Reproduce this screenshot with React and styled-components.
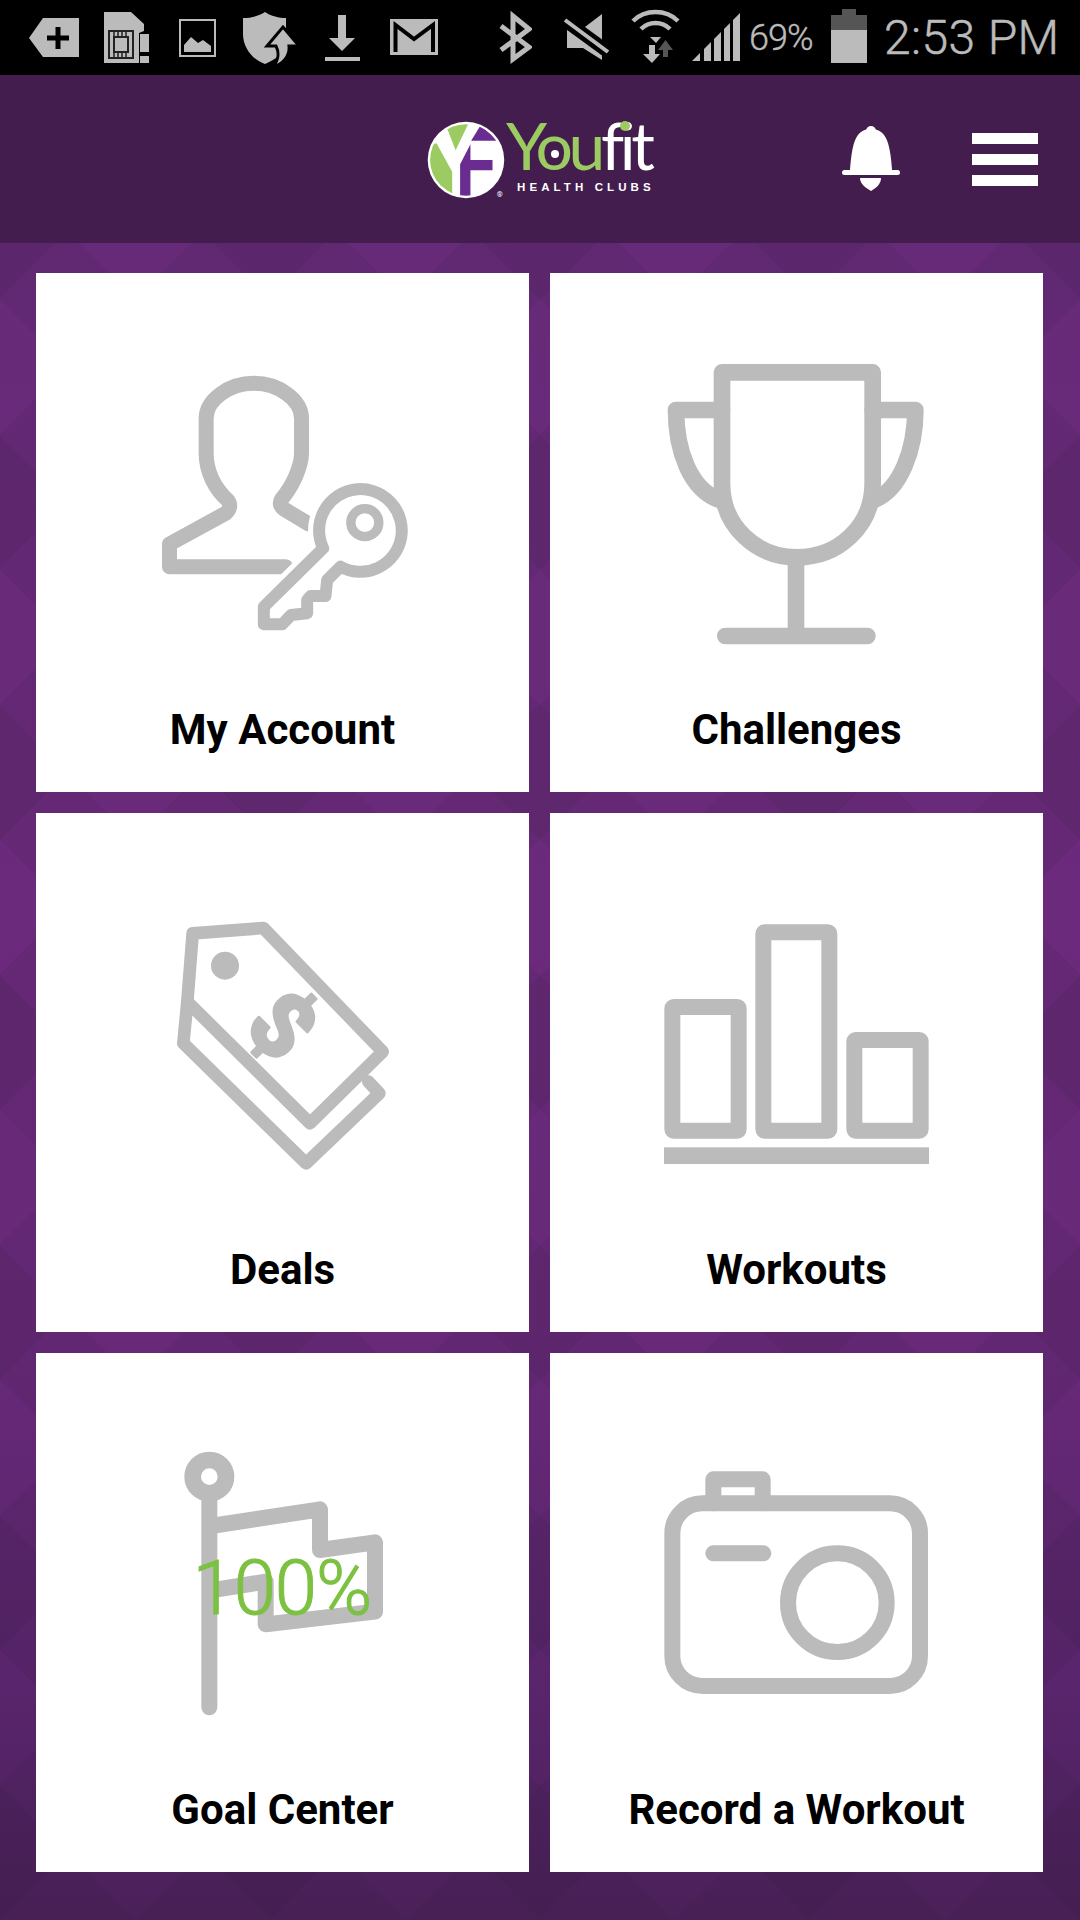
import React from 'react'
import styled, { createGlobalStyle } from 'styled-components'

const GlobalStyle = createGlobalStyle`
  html, body {
    margin: 0;
    padding: 0;
    background: #000;
  }
  * {
    box-sizing: border-box;
  }
`

const Page = styled.div`
  width: 1080px;
  height: 1920px;
  display: flex;
  flex-direction: column;
  overflow: hidden;
  font-family: Roboto, "Liberation Sans", sans-serif;
`

const StatusBar = styled.div`
  height: 75px;
  flex: none;
  background: #000;
  display: flex;
  align-items: center;
  padding-left: 29px;
  color: #bbb;
`

const StatusSvg = styled.svg`
  flex: none;
  height: 75px;
  margin-left: ${(p) => p.$left || 0}px;
  fill: #bbb;
`

const Battery = styled.span`
  flex: none;
  width: 66px;
  margin-left: 9px;
  font-size: 36px;
  font-weight: 300;
  white-space: nowrap;
  letter-spacing: -1px;
  -webkit-text-stroke: 0.4px #bbb;
`

const Clock = styled.span`
  flex: none;
  margin-left: 17px;
  font-size: 48px;
  font-weight: 300;
  white-space: nowrap;
  letter-spacing: 0.4px;
  -webkit-text-stroke: 0.5px #bbb;
`

const Header = styled.header`
  height: 168px;
  flex: none;
  background: #431d4e;
  display: flex;
  align-items: center;
  padding: 0 42px 0 427px;
`

const Logo = styled.div`
  display: flex;
  width: 231px;
  height: 80px;
  margin-top: 2px;
`

const LogoMark = styled.svg`
  flex: none;
  width: 80px;
  height: 80px;
`

const LogoText = styled.div`
  position: relative;
  margin-left: -1px;
  display: flex;
  flex-direction: column;
  color: #fff;
`

const Word = styled.div`
  font-family: Lato, Roboto, sans-serif;
  font-size: 66px;
  line-height: 66px;
  height: 66px;
  margin-top: -8px;
  letter-spacing: -4.4px;
  font-variant-ligatures: none;
  white-space: nowrap;
`

const WordGreen = styled.span`
  color: #9ccb62;
`

const OCenter = styled.span`
  position: absolute;
  left: 45px;
  top: 30px;
  width: 8px;
  height: 8px;
  border-radius: 50%;
  background: #fff;
`

const IDot = styled.span`
  position: absolute;
  left: 114px;
  top: 1px;
  width: 10px;
  height: 10px;
  border-radius: 50%;
  background: #9ccb62;
`

const Tagline = styled.div`
  font-family: "Liberation Sans", sans-serif;
  font-size: 11.5px;
  line-height: 12px;
  font-weight: 700;
  letter-spacing: 4.1px;
  margin: 3px 0 0 11px;
  white-space: nowrap;
`

const BellIcon = styled.svg`
  flex: none;
  width: 58px;
  height: 66px;
  margin-left: auto;
  fill: #fff;
`

const Burger = styled.div`
  flex: none;
  width: 66px;
  margin-left: 72px;
  display: flex;
  flex-direction: column;
  gap: 10px;
`

const BurgerBar = styled.span`
  display: block;
  height: 11px;
  background: #fff;
`

const Main = styled.main`
  flex: 1;
  padding: 30px 37px 0 36px;
  display: grid;
  grid-template-columns: 493px 493px;
  grid-auto-rows: 519px;
  gap: 21px;
  align-content: start;
  background:
    repeating-linear-gradient(45deg, rgba(30, 20, 40, 0.08) 0 95px, transparent 95px 191px),
    repeating-linear-gradient(-45deg, rgba(30, 20, 40, 0.08) 0 95px, transparent 95px 191px),
    linear-gradient(180deg, #672a79 0%, #6b2a7b 40%, #682979 65%, #57246a 88%, #4b2159 100%);
`

const Card = styled.div`
  background: #fff;
  padding-top: 66px;
  display: flex;
  flex-direction: column;
  align-items: center;
`

const IconBox = styled.div`
  position: relative;
  width: 300px;
  height: 320px;
  flex: none;
`

const Icon = styled.svg`
  display: block;
  width: 300px;
  height: 320px;
  overflow: visible;
  fill: none;
  stroke: #bbb;
  stroke-linecap: round;
  stroke-linejoin: round;
`

const Percent = styled.span`
  position: absolute;
  left: 60px;
  top: 131px;
  font-size: 76px;
  line-height: 76px;
  font-weight: 300;
  letter-spacing: -1px;
  color: #7cc142;
  -webkit-text-stroke: 1px #7cc142;
  white-space: nowrap;
`

const Label = styled.div`
  margin-top: 46px;
  font-size: 42px;
  line-height: 50px;
  font-weight: 700;
  color: #000;
  white-space: nowrap;
`

// the status row, coordinates are px inside the 75px tall bar
const TagPlus = () => (
  <StatusSvg width="50" viewBox="0 0 50 75">
    <polygon points="0,38 14,18 50,18 50,57 14,57" />
    <path d="M29 27v22M18 38h22" stroke="#000" strokeWidth="5" />
  </StatusSvg>
)

const SimAlert = () => (
  <StatusSvg $left={25} width="45" viewBox="0 0 45 75">
    <polygon points="0,12 27,12 40,24 40,31 35,33 35,63 0,63" />
    <rect x="36" y="34" width="9" height="18" />
    <rect x="36" y="56" width="9" height="7" />
    <rect x="5" y="31" width="24" height="27" fill="none" stroke="#222" strokeWidth="2" />
    <rect x="10" y="37" width="14" height="15" fill="none" stroke="#222" strokeWidth="2" />
    <path d="M10 31v6M14 31v6M18 31v6M22 31v6M10 52v6M14 52v6M18 52v6M22 52v6" stroke="#222" strokeWidth="1.5" />
  </StatusSvg>
)

const PictureIcon = () => (
  <StatusSvg $left={30} width="37" viewBox="0 0 37 75">
    <rect x="1" y="20" width="35" height="36" fill="none" stroke="#bbb" strokeWidth="2" />
    <polygon points="5,52 5,45 12,37 19,43 24,40 32,46 32,52" />
  </StatusSvg>
)

const ShieldIcon = () => (
  <StatusSvg $left={27} width="53" viewBox="0 0 53 75">
    <path d="M22 12C28 16 36 18 43 18V42C43 52 32 60 22 64C10 60 0 48 0 34V18C8 18 16 16 22 12Z" />
    <path d="M30 67C36 60 36 52 33 46H24L40 27L56 46H46C47 56 40 64 30 67Z" stroke="#000" strokeWidth="3" />
  </StatusSvg>
)

const DownloadIcon = () => (
  <StatusSvg $left={29} width="35" viewBox="0 0 35 75">
    <polygon points="13,15 21,15 21,38 30,38 17,51 4,38 13,38" />
    <rect x="0" y="57" width="35" height="4" />
  </StatusSvg>
)

const GmailIcon = () => (
  <StatusSvg $left={30} width="48" viewBox="0 0 48 75">
    <rect x="0" y="19" width="48" height="36" />
    <path d="M5.5 52V25L24 39L43 25V52" fill="none" stroke="#000" strokeWidth="4" />
  </StatusSvg>
)

const BluetoothIcon = () => (
  <StatusSvg $left={61} width="33" viewBox="0 0 33 75">
    <path d="M2 26L30 47L14 59V16L30 29L2 50" fill="none" stroke="#bbb" strokeWidth="5" />
  </StatusSvg>
)

const MuteIcon = () => (
  <StatusSvg $left={31} width="48" viewBox="0 0 48 75">
    <polygon points="39,14 39,60 20,48 4,48 4,30 18,30" />
    <path d="M0 19L48 54" stroke="#000" strokeWidth="13" />
    <path d="M2 20L45 52" stroke="#bbb" strokeWidth="4" />
  </StatusSvg>
)

const WifiIcon = () => (
  <StatusSvg $left={20} width="49" viewBox="0 0 49 75">
    <g fill="none" stroke="#bbb" strokeWidth="4.5">
      <path d="M2 21C14 9 35 9 47 21" />
      <path d="M10 29C18 21 31 21 39 29" />
    </g>
    <polygon points="19,37 30,37 25,43" />
    <polygon points="18,45 24,45 24,54 29,54 21,63 12,54 18,54" />
    <polygon points="32,50 32,57 37,57 37,50 42,50 34.500,40 27,50" fill="#555" />
  </StatusSvg>
)

const SignalIcon = () => (
  <StatusSvg $left={12} width="48" viewBox="0 0 48 75">
    <polygon points="0,61 8,53 8,61" />
    <polygon points="12,61 12,49 19,42 19,61" />
    <polygon points="22,61 22,39 29,32 29,61" />
    <polygon points="32,61 32,29 38,23 38,61" />
    <polygon points="41,61 41,20 48,13 48,61" />
  </StatusSvg>
)

const BatteryIcon = () => (
  <StatusSvg $left={16} width="36" viewBox="0 0 36 75">
    <rect x="11" y="9" width="14" height="6" fill="#555" />
    <rect x="0" y="15" width="36" height="15" fill="#555" />
    <rect x="0" y="30" width="36" height="33" />
  </StatusSvg>
)

// logo drawn in the crop's own units, 240 across
const YfMark = () => (
  <LogoMark viewBox="52 62 232 232">
    <defs>
      <clipPath id="yf-disc">
        <circle cx="165" cy="178" r="104" />
      </clipPath>
    </defs>
    <circle cx="165" cy="178" r="111" fill="#fff" />
    <g clipPath="url(#yf-disc)">
      <polygon points="40,130 80,130 125,212 125,290 40,290" fill="#9ccb62" />
      <polygon points="100,60 178,60 135,150" fill="#9ccb62" />
      <polygon points="207,78 260,122 180,122" fill="#6b2c91" />
      <polygon points="178,132 148,190 148,290 178,290 178,208 242,208 242,178 178,178" fill="#6b2c91" />
    </g>
    <text x="263" y="286" fontSize="22" fill="#fff" textAnchor="middle" fontFamily="Roboto, sans-serif">®</text>
  </LogoMark>
)

const Bell = () => (
  <BellIcon viewBox="0 0 58 66">
    <circle cx="29" cy="5" r="5" />
    <path d="M29 3C15 3 10 14 8 44H50C48 14 43 3 29 3Z" />
    <rect x="0" y="44" width="58" height="5" rx="2.5" />
    <path d="M18 52H39C39 58 34 62 29 65C24 62 18 58 18 52Z" />
  </BellIcon>
)

const AccountIcon = () => (
  <Icon viewBox="12.500 -33 900 960">
    <path
      strokeWidth="45"
      d="M470 650H122V582L290 490Q312 472 296 450C262 420 232 370 232 310V205C232 150 300 100 375 100C450 100 518 150 518 205V310C518 350 490 410 460 445Q445 465 470 480L540 522"
    />
    <path
      stroke="#fff"
      strokeWidth="66"
      fill="#fff"
      d="M583 595L405 770V823H460L487 795L535 790V750L545 738H590L595 690L635 650A124 124 0 1 0 583 595Z"
    />
    <path
      strokeWidth="36"
      fill="#fff"
      d="M583 595L405 770V823H460L487 795L535 790V750L545 738H590L595 690L635 650A124 124 0 1 0 583 595Z"
    />
    <circle cx="708" cy="518" r="42" strokeWidth="28" />
  </Icon>
)

const TrophyIcon = () => (
  <Icon viewBox="21 -33 900 960" strokeWidth="50">
    <path d="M246 67H698V400C698 530 594 622 472 622C350 622 246 530 246 400Z" />
    <path d="M246 180H108C108 300 150 420 240 450" />
    <path d="M698 180H826C826 300 780 420 702 450" />
    <path d="M468 622V858M256 858H682" />
  </Icon>
)

const DealsIcon = () => (
  <Icon viewBox="-51 -63 900 960" strokeWidth="38">
    <path d="M128 100L340 84L698 455L480 670L112 305Z" />
    <path d="M112 305L100 430L468 790L688 580L655 545" />
    <circle cx="225" cy="197" r="42" fill="#bbb" stroke="none" />
    <text
      x="398"
      y="375"
      transform="rotate(45 398 375)"
      dy="95"
      textAnchor="middle"
      fontSize="270"
      fontWeight="900"
      fontFamily="Roboto, sans-serif"
      fill="#bbb"
      strokeWidth="8"
    >
      $
    </text>
  </Icon>
)

const WorkoutsIcon = () => (
  <Icon viewBox="21 -63 900 960" strokeWidth="48">
    <rect x="97" y="321" width="199" height="371" rx="4" />
    <rect x="370" y="97" width="198" height="595" rx="4" />
    <rect x="643" y="420" width="199" height="272" rx="4" />
    <rect x="72" y="742" width="795" height="50" fill="#bbb" stroke="none" />
  </Icon>
)

const GoalIcon = () => (
  <Icon viewBox="-111 -33 900 960" strokeWidth="48">
    <path d="M118 200V832" />
    <circle cx="118" cy="140" r="50" strokeWidth="50" />
    <path d="M142 285L450 238V360L615 337V545L287 583V455L142 478" />
  </Icon>
)

const CameraIcon = () => (
  <Icon viewBox="-9 -93 900 960" strokeWidth="48">
    <rect x="67" y="160" width="743" height="548" rx="90" />
    <path d="M190 160V88H338V160" />
    <path d="M190 310H340" />
    <circle cx="562" cy="458" r="148" />
  </Icon>
)

const tiles = [
  { label: 'My Account', icon: <AccountIcon /> },
  { label: 'Challenges', icon: <TrophyIcon /> },
  { label: 'Deals', icon: <DealsIcon /> },
  { label: 'Workouts', icon: <WorkoutsIcon /> },
  { label: 'Goal Center', icon: <GoalIcon />, percent: '100%' },
  { label: 'Record a Workout', icon: <CameraIcon /> },
]

const App = () => {
  return (
    <Page>
      <GlobalStyle />
      <StatusBar>
        <TagPlus />
        <SimAlert />
        <PictureIcon />
        <ShieldIcon />
        <DownloadIcon />
        <GmailIcon />
        <BluetoothIcon />
        <MuteIcon />
        <WifiIcon />
        <SignalIcon />
        <Battery>69%</Battery>
        <BatteryIcon />
        <Clock>2:53 PM</Clock>
      </StatusBar>
      <Header>
        <Logo>
          <YfMark />
          <LogoText>
            <Word>
              <WordGreen>You</WordGreen>fit
            </Word>
            <OCenter />
            <IDot />
            <Tagline>HEALTH CLUBS</Tagline>
          </LogoText>
        </Logo>
        <Bell />
        <Burger>
          <BurgerBar />
          <BurgerBar />
          <BurgerBar />
        </Burger>
      </Header>
      <Main>
        {tiles.map((tile) => (
          <Card key={tile.label}>
            <IconBox>
              {tile.icon}
              {tile.percent && <Percent>{tile.percent}</Percent>}
            </IconBox>
            <Label>{tile.label}</Label>
          </Card>
        ))}
      </Main>
    </Page>
  )
}

export default App
